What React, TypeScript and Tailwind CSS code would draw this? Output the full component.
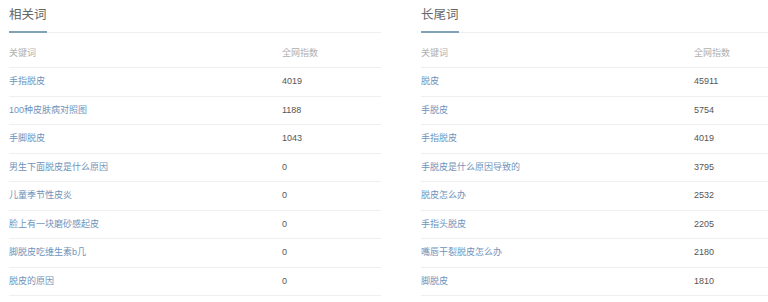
import React from 'react';

type Row = { kw: string; idx: number };

const related: Row[] = [
  { kw: '手指脱皮', idx: 4019 },
  { kw: '100种皮肤病对照图', idx: 1188 },
  { kw: '手脚脱皮', idx: 1043 },
  { kw: '男生下面脱皮是什么原因', idx: 0 },
  { kw: '儿童季节性皮炎', idx: 0 },
  { kw: '脸上有一块磨砂感起皮', idx: 0 },
  { kw: '脚脱皮吃维生素b几', idx: 0 },
  { kw: '脱皮的原因', idx: 0 },
];

const longTail: Row[] = [
  { kw: '脱皮', idx: 45911 },
  { kw: '手脱皮', idx: 5754 },
  { kw: '手指脱皮', idx: 4019 },
  { kw: '手脱皮是什么原因导致的', idx: 3795 },
  { kw: '脱皮怎么办', idx: 2532 },
  { kw: '手指头脱皮', idx: 2205 },
  { kw: '嘴唇干裂脱皮怎么办', idx: 2180 },
  { kw: '脚脱皮', idx: 1810 },
];

function KeywordTable({ title, rows }: { title: string; rows: Row[] }) {
  return (
    <div className="w-[372px] shrink-0">
      {/* Tab-like title */}
      <div className="pt-[6px] border-b border-[#efefef]">
        <span className="block w-fit text-[12.5px] leading-[18px] text-[#666] pb-[7px] border-b-2 border-[#7fa2b9] -mb-px">
          {title}
        </span>
      </div>

      {/* Header */}
      <div className="mt-[7px] h-[28px] flex items-center border-b border-[#efefef] text-[9px] text-[#b0b0b0]">
        <div className="w-[273px]">关键词</div>
        <div>全网指数</div>
      </div>

      {rows.map((r) => (
        <div
          key={r.kw}
          className="h-[28.5px] flex items-center border-b border-[#efefef] text-[9px]"
        >
          <div className="w-[273px] text-[#6f93bb]">{r.kw}</div>
          <div className="text-[#555]">{r.idx}</div>
        </div>
      ))}
    </div>
  );
}

export default function App() {
  return (
    <div
      className="w-[768px] h-[302px] overflow-hidden bg-white flex gap-[40px] pl-[9px]"
      style={{ fontFamily: '"Liberation Sans", "Noto Sans CJK SC", sans-serif' }}
    >
      <KeywordTable title="相关词" rows={related} />
      <KeywordTable title="长尾词" rows={longTail} />
    </div>
  );
}
